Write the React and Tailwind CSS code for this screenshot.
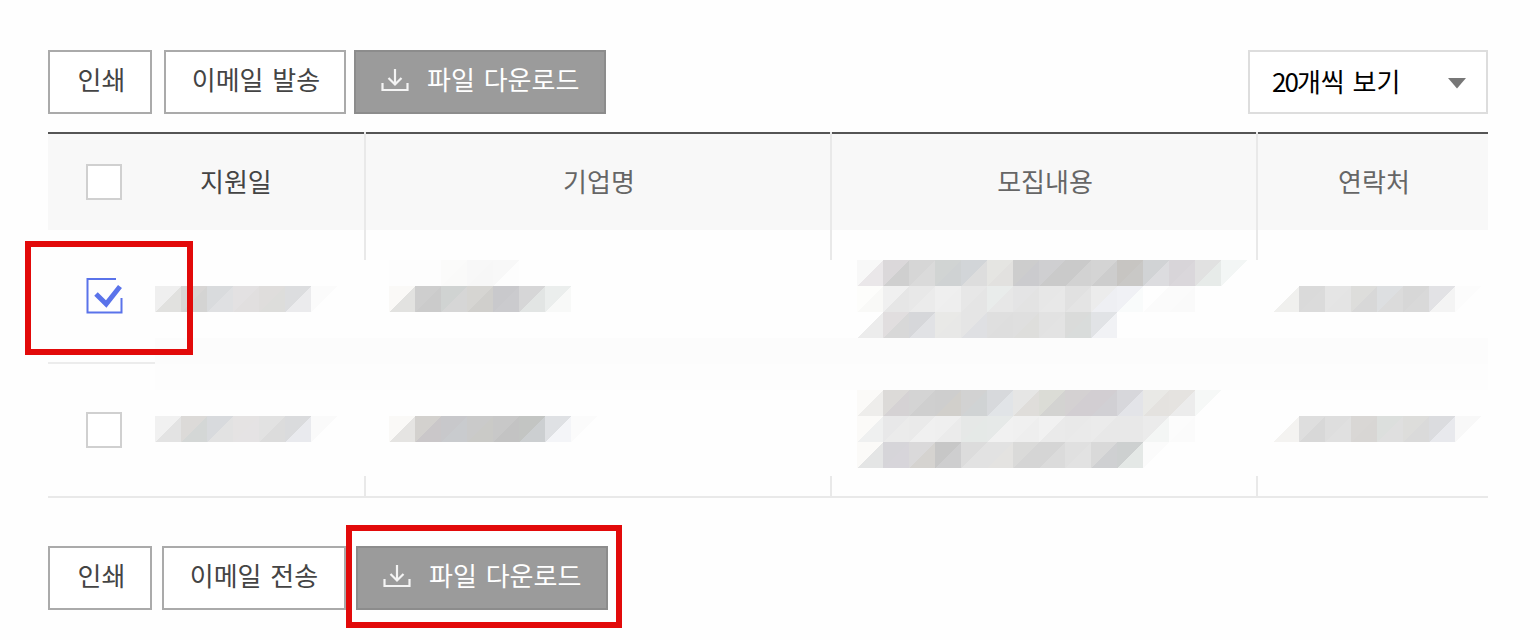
import React, { useState } from 'react';

// each tile is "upper-left colour / lower-right colour"
const applications = [
  {
    id: 1,
    date: [['efefef/e1e1df', 'd8d6d5/d4d4d3', 'd9dbdd/dfe0e2', 'e3e1e2/e1dfdf', 'dfdddc/dddddb', 'dcdddf/ebebed', 'fbfbfb/fefefe']],
    company: [
      ['fdfdfd/fdfdfd', 'fdfdfd/fdfdfd', 'fbfbfa/fafaf9', 'f8f8f8/f7f7f7', 'f8f8f8/fdfdfd'],
      ['faf9f7/e2e2e0', 'cecece/cbcbcb', 'd0d3d2/d6d6d6', 'd6d5d2/d0cfcc', 'c9c9cc/cbcbce', 'd6d6d7/e2e5e4', 'ebeeed/f8f9f8'],
    ],
    content: [
      ['f8f8f8/eae7e9', 'dbd8da/cfcfcf', 'd6d6d6/dadada', 'd1d4d3/cfd2d3', 'd2d5d8/dddddd', 'e5e5e2/e2e1df', 'cdcdcd/cbcbce', 'cfcfd1/cacaca', 'cacaca/d2d2d2', 'd4d4d4/cdcdcd', 'c7c5c2/c9c8c6', 'd1d3d5/dcdcdf', 'd8d5d9/dad7db', 'e1e1e1/e7ebe9', 'f3f6f5/fefefe'],
      ['fdfdfb/f9f9f7', 'f0f0f0/e6e6e6', 'e8e8e8/ebebeb', 'efefef/eeeeee', 'e7e7e7/e5e5e5', 'e9eceb/e7e7e7', 'e4e4e5/e3e3e3', 'e7e7e7/e8e8e8', 'e1e1e1/e4e4e4', 'ececec/eeeff3', 'f0f1f5/f9fbfb', 'fefefe/fbfbfb', 'fbfbfb/fafafa', 'fefefe/fefefe'],
      ['fefefe/ececec', 'e1dedf/d8d8d8', 'd6d7da/e1e2e5', 'e9e9e7/e8e8e7', 'e5e5e5/dfe0e3', 'dfdfdf/dedede', 'dfdfdf/dededc', 'e2e2e2/e3e3e3', 'dadbda/d9dcdb', 'e1e3e6/f1f2f5'],
    ],
    phone: [['fefefe/f0f0ee', 'dadada/dbdbdb', 'e5e5e5/e4e4e4', 'dddddb/d8d8d8', 'dddfe1/dbdbdb', 'd7d7d7/d9d9d9', 'e2e2e5/f4f4f4', 'fcfcfc/fefefe']],
  },
  {
    id: 2,
    date: [['f1f1f1/e3e3e3', 'dcdad8/d4d7d6', 'd8dadd/e2e2e2', 'e5e3e3/e5e3e4', 'e2e2e2/dcdcdc', 'dadbdd/e9eaee', 'fafafa/fefefe']],
    company: [
      [],
      ['faf9f7/e5e4e2', 'd3d1ce/cac7c9', 'c8c8cb/c9cbce', 'cacaca/cacac7', 'c8c8c8/c3c3c3', 'c3c5c3/cccfd1', 'dfe1e4/f4f5f8', 'fbfbfb/fefefe'],
    ],
    content: [
      ['fbfaf8/eeedeb', 'dcdad8/d5d2d4', 'd4d4d4/cfcfcf', 'cecece/d1cfcb', 'd2d2d2/d0d3d4', 'd7d9dc/e1e4e7', 'e6e6e5/dfddda', 'dbdcd6/d3d3d1', 'd4d1d2/d2ced2', 'd2ced2/d1d0d4', 'd7d7db/e3e4e8', 'e9e9e6/e4e2df', 'e5e3e0/ececec', 'f6f8f7/fefefe'],
      ['fbfaf8/eff0f0', 'e8e8e9/ebebeb', 'eaeaea/f0f0f0', 'efefef/ebebeb', 'e6e8e7/e5e9e7', 'e6e9e8/f1f1f1', 'f0f0f0/eeeeee', 'f1f1f1/eaeaea', 'e9e9e9/eaeaea', 'ebebeb/e8e8e8', 'e8e8e8/e8e8e8', 'ebebeb/f4f6f5', 'fcfcfc/fbfbfb'],
      ['fbfaf8/e4e5e5', 'd6d5d9/d7d5da', 'dad9da/d5d3d0', 'c7c7c7/cececf', 'dcdcdc/e2e2e2', 'e2e2e2/e4e3e1', 'dadad9/d5d5d5', 'd5d5d5/dbdbdb', 'e0e0e0/e2e2e2', 'd9d9d9/cfd0d2', 'cdd0d0/e4e8e6', 'fbfbfb/fefefe'],
    ],
    phone: [['fefefe/f4f3f1', 'dedede/d8d8d8', 'dedede/e0e0e0', 'd9d7d5/d8d6d4', 'dcdfdd/dfdfdf', 'dddddb/dadada', 'dbdcdf/e8e9ed', 'f8f8f8/fefefe']],
  },
];

const TILE = 26;

const Mosaic = ({ rows }) => {
  const cols = Math.max(...rows.map((r) => r.length));
  return (
    <svg width={cols * TILE} height={rows.length * TILE} shapeRendering="crispEdges" className="block shrink-0">
      {rows.map((row, y) =>
        row.map((tile, x) => {
          const [top, bottom] = tile.split('/');
          const left = x * TILE;
          const up = y * TILE;
          return (
            <g key={`${x}-${y}`}>
              <rect x={left} y={up} width={TILE} height={TILE} fill={`#${bottom}`} />
              <path d={`M${left} ${up}h${TILE}l${-TILE} ${TILE}z`} fill={`#${top}`} />
            </g>
          );
        }),
      )}
    </svg>
  );
};

const DownloadIcon = () => (
  <svg width="28" height="24" viewBox="0 0 28 24" fill="none" stroke="#f4f4f4" strokeWidth="2.2" className="mt-0.5 shrink-0">
    <path d="M14 1v15M7.5 10l6.5 6.5 6.5-6.5" />
    <path d="M1.5 15V22h25v-7" />
  </svg>
);

const CheckBox = ({ checked, onClick }) => {
  if (checked) {
    return (
      <svg width="37" height="37" viewBox="0 0 37 37" fill="none" stroke="#5a73ea" onClick={onClick} className="shrink-0">
        <path d="M30 2H1.5v33.5h34V21" strokeWidth="2" />
        <path d="M10 17l10.2 10L34 9.5" strokeWidth="5" />
      </svg>
    );
  }
  return <div onClick={onClick} className="size-9 shrink-0 border-2 border-[#d0d0d0] bg-white" />;
};

const Toolbar = ({ sendLabel, bottom }) => (
  <div className="flex h-16 text-[#444]">
    <button className="w-[104px] border-2 border-[#aaa] bg-white pb-1.5 pl-[3px]">인쇄</button>
    <button
      className={
        bottom
          ? 'ml-[10px] w-[184px] border-2 border-[#aaa] bg-white pb-1.5 [word-spacing:3px]'
          : 'ml-3 w-[182px] border-2 border-[#aaa] bg-white pb-1.5 pl-0.5 [word-spacing:3px]'
      }
    >
      {sendLabel}
    </button>
    <button
      className={
        bottom
          ? 'ml-[10px] flex w-[252px] items-center border-2 border-[#8c8c8c] bg-[#9b9b9b] pb-1.5 pl-[25px] text-white [word-spacing:3px]'
          : 'ml-2 flex w-[252px] items-center border-2 border-[#8c8c8c] bg-[#9b9b9b] pb-1.5 pl-[25px] text-white [word-spacing:3px]'
      }
    >
      <DownloadIcon />
      <span className="ml-[18px]">파일 다운로드</span>
    </button>
  </div>
);

// short pieces of the column dividers above and below the rows
const Dividers = ({ className }) => (
  <div className={`flex ${className}`}>
    <div className="w-[316px]" />
    <div className="w-[466px] border-l-2 border-[#e9e9e9]" />
    <div className="w-[426px] border-l-2 border-[#e9e9e9]" />
    <div className="w-[232px] border-l-2 border-[#e9e9e9]" />
  </div>
);

const App = () => {
  const [selected, setSelected] = useState([1]);

  const toggle = (id) => {
    setSelected((prev) => (prev.includes(id) ? prev.filter((i) => i !== id) : [...prev, id]));
  };

  return (
    <div className="relative h-[640px] w-[1540px] overflow-hidden bg-[#fefefe] pl-12 pt-[50px] font-['Noto_Sans_CJK_KR',sans-serif] text-[26px] leading-8">
      <div className="w-[1440px]">
        <div className="flex justify-between">
          <Toolbar sendLabel="이메일 발송" />
          <div className="flex h-16 w-60 items-center justify-between border-2 border-[#ddd] bg-white pl-[22px] pr-5 text-black">
            <span className="pb-0.5 [word-spacing:2px]">
              <span className="tracking-[-2px]">20</span>개씩 보기
            </span>
            <svg width="18" height="11" viewBox="0 0 18 11" fill="#777" className="mt-0.5">
              <path d="M0 0h18L9 10.5z" />
            </svg>
          </div>
        </div>

        <div className="mt-[18px] flex h-[98px] bg-[#f8f8f8] text-[#666]">
          <div className="flex w-[316px] items-center border-t-2 border-[#555] pl-[38px] text-[#444]">
            <CheckBox />
            <span className="ml-[78px] pb-0.5">지원일</span>
          </div>
          <div className="flex w-[466px] border-l-2 border-[#e9e9e9]">
            <div className="flex flex-1 items-center justify-center border-t-2 border-[#555] pb-0.5 pl-0.5">기업명</div>
          </div>
          <div className="flex w-[426px] border-l-2 border-[#e9e9e9]">
            <div className="flex flex-1 items-center justify-center border-t-2 border-[#555] pb-0.5 pl-0.5">모집내용</div>
          </div>
          <div className="flex w-[232px] border-l-2 border-[#e9e9e9]">
            <div className="flex flex-1 items-center justify-center border-t-2 border-[#555] pb-0.5 pl-0.5">연락처</div>
          </div>
        </div>

        <Dividers className="h-[30px]" />
        {applications.map((item, i) => (
          <React.Fragment key={item.id}>
            <div className={i === 0 ? 'flex h-[78px]' : 'flex h-[86px]'}>
              <div className={i === 0 ? 'w-[107px] pl-[38px] pt-[17px]' : 'w-[107px] pl-[38px] pt-[22px]'}>
                <CheckBox checked={selected.includes(item.id)} onClick={() => toggle(item.id)} />
              </div>
              <div className="w-[234px] pt-[26px]">
                <Mosaic rows={item.date} />
              </div>
              <div className="w-[468px]">
                <Mosaic rows={item.company} />
              </div>
              <div className="w-[416px]">
                <Mosaic rows={item.content} />
              </div>
              <div className="pt-[26px]">
                <Mosaic rows={item.phone} />
              </div>
            </div>
            {i === 0 && (
              <div className="flex h-[52px]">
                <div className="h-[26px] w-[107px] border-b-2 border-[#ececec]" />
                <div className="flex flex-1 flex-col">
                  <div className="h-[26px] bg-[#fcfcfc]" />
                  <div className="h-[26px] bg-[#fdfdfd]" />
                </div>
              </div>
            )}
          </React.Fragment>
        ))}
        <Dividers className="h-[22px] border-b-2 border-[#e9e9e9]" />

        <div className="mt-12">
          <Toolbar sendLabel="이메일 전송" bottom />
        </div>
      </div>

      {/* highlight frames */}
      <div className="pointer-events-none absolute left-[25px] top-[241px] h-[114px] w-[168px] border-[6px] border-[#e20a0a]" />
      <div className="pointer-events-none absolute left-[346px] top-[525px] h-[103px] w-[276px] border-[6px] border-[#e20a0a]" />
    </div>
  );
};

export default App;
